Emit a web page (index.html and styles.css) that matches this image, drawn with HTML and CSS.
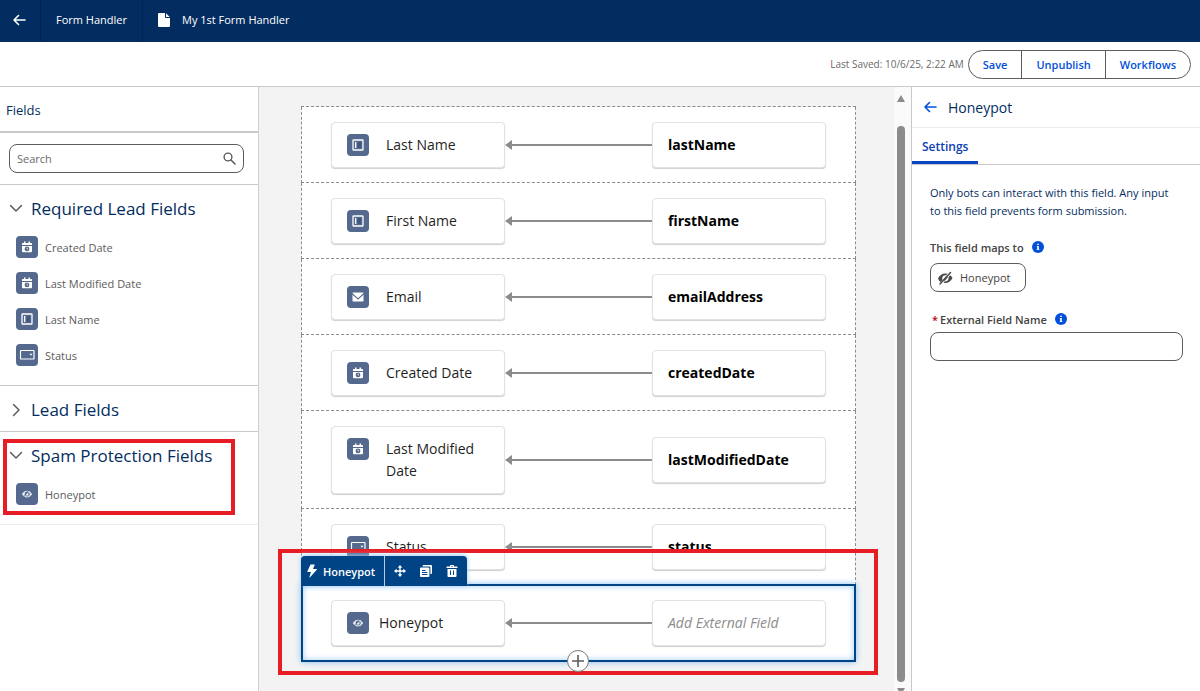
FILE: index.html
```
<!DOCTYPE html>
<html lang="en">

<head>
    <meta charset="UTF-8">
    <meta name="viewport" content="width=device-width, initial-scale=1.0">
    <title>My 1st Form Handler</title>
    <link rel="stylesheet" href="styles.css">
</head>

<body>
    <!-- shared icons -->
    <svg class="sprite" aria-hidden="true">
        <symbol id="i-date" viewBox="0 0 22 22">
            <path fill="#fff" d="M8 5.500h1.500V7h3V5.500H14V7h1.500l.5.500V9H6V7.500l.5-.5H8zM6 10h10v5.500l-.7.700H6.700L6 15.500z" />
            <circle cx="11" cy="12.900" r="2.400" fill="#54698d" />
            <path d="M11 11.500v1.500h1" stroke="#fff" stroke-width=".7" fill="none" />
        </symbol>
        <symbol id="i-text" viewBox="0 0 22 22">
            <rect x="6" y="6" width="10" height="10" rx=".6" fill="none" stroke="#fff" stroke-width="1.300" />
            <path d="M8.700 8v6" stroke="#fff" stroke-width="1.300" />
            <path d="M10.500 8.200h3.500v5.600h-3.500z" fill="#3f557c" />
        </symbol>
        <symbol id="i-mail" viewBox="0 0 22 22">
            <path fill="#fff" d="M5.500 7.200q0-.7.700-.7h9.600q.7 0 .7.700L11 12.200zM5.500 8.700l5.500 5 5.500-5v6q0 .8-.8.8H6.300q-.8 0-.8-.8z" />
        </symbol>
        <symbol id="i-picklist" viewBox="0 0 22 22">
            <rect x="4.500" y="6.500" width="13.500" height="8.500" rx=".6" fill="none" stroke="#fff" stroke-width="1.200" />
            <path d="M13.500 9.700h3l-1.500 2z" fill="#fff" />
        </symbol>
        <symbol id="i-eye" viewBox="0 0 22 22">
            <path fill="#e4e9f1" d="M5.800 11.200Q8 7.800 11 7.800t5.200 3.400Q14 14.400 11 14.400t-5.200-3.200z" />
            <circle cx="11.200" cy="11.100" r="2.500" fill="#54698d" />
            <circle cx="11.400" cy="11.500" r="1.200" fill="#e4e9f1" />
            <path d="M8 13.800l3.800-5.400" stroke="#54698d" stroke-width=".8" />
            <path d="M9 14l4.500-6" stroke="#e4e9f1" stroke-width=".6" />
        </symbol>
        <symbol id="i-back" viewBox="0 0 14 14">
            <path d="M13 7H2M6.500 2.500L2 7l4.500 4.500" fill="none" stroke="currentColor" stroke-width="1.600" stroke-linecap="round" stroke-linejoin="round" />
        </symbol>
        <symbol id="i-chevron" viewBox="0 0 14 14">
            <path d="M1.500 4.500L7 10l5.500-5.500" fill="none" stroke="currentColor" stroke-width="1.500" stroke-linecap="round" stroke-linejoin="round" />
        </symbol>
        <symbol id="i-info" viewBox="0 0 12 12">
            <circle cx="6" cy="6" r="6" fill="#0250d9" />
            <path d="M5.200 2.700h1.600v1.400H5.200zM4.800 5h2v3.300h.5V9H4.700v-.7h.5V5.700h-.4z" fill="#fff" />
        </symbol>
    </svg>

    <header class="topbar">
        <button class="topbar-back" aria-label="Back"><svg width="14" height="14"><use href="#i-back" /></svg></button>
        <a class="topbar-link" href="#">Form Handler</a>
        <div class="topbar-title">
            <svg width="12" height="14" viewBox="0 0 12 14">
                <path fill="#fff" d="M1.200 0H7v4.200q0 .8.800.8H12v7.800q0 1.200-1.200 1.200H1.200Q0 14 0 12.800V1.200Q0 0 1.200 0zM8 .2L11.800 4H8z" />
            </svg>
            <h1>My 1st Form Handler</h1>
        </div>
    </header>

    <div class="actions">
        <span class="saved">Last Saved: 10/6/25, 2:22 AM</span>
        <div class="button-group">
            <button>Save</button>
            <button>Unpublish</button>
            <button>Workflows</button>
        </div>
    </div>

    <div class="builder">
        <!-- Left: available fields -->
        <aside class="sidebar">
            <h2 class="sidebar-title">Fields</h2>
            <div class="search">
                <div class="search-box">
                    <input type="text" placeholder="Search" aria-label="Search fields">
                    <svg width="13" height="13" viewBox="0 0 13 13">
                        <circle cx="5" cy="5" r="3.900" fill="none" stroke="#5c5c5c" stroke-width="1.400" />
                        <path d="M8 8l4 4" stroke="#5c5c5c" stroke-width="1.600" stroke-linecap="round" />
                    </svg>
                </div>
            </div>

            <section class="group">
                <button class="group-head"><svg width="14" height="14"><use href="#i-chevron" /></svg>Required Lead Fields</button>
                <ul>
                    <li><svg class="field-icon"><use href="#i-date" /></svg>Created Date</li>
                    <li><svg class="field-icon"><use href="#i-date" /></svg>Last Modified Date</li>
                    <li><svg class="field-icon"><use href="#i-text" /></svg>Last Name</li>
                    <li><svg class="field-icon"><use href="#i-picklist" /></svg>Status</li>
                </ul>
            </section>
            <section class="group">
                <button class="group-head closed"><svg width="14" height="14"><use href="#i-chevron" /></svg>Lead Fields</button>
            </section>
            <section class="group last">
                <button class="group-head"><svg width="14" height="14"><use href="#i-chevron" /></svg>Spam Protection Fields</button>
                <ul>
                    <li><svg class="field-icon"><use href="#i-eye" /></svg>Honeypot</li>
                </ul>
                <div class="highlight"></div>
            </section>
        </aside>

        <!-- Center: field mappings -->
        <main class="canvas">
            <div class="mappings">
                <div class="row">
                    <div class="card"><svg class="field-icon"><use href="#i-text" /></svg><span>Last Name</span></div>
                    <div class="arrow"></div>
                    <div class="card external">lastName</div>
                </div>
                <div class="row">
                    <div class="card"><svg class="field-icon"><use href="#i-text" /></svg><span>First Name</span></div>
                    <div class="arrow"></div>
                    <div class="card external">firstName</div>
                </div>
                <div class="row">
                    <div class="card"><svg class="field-icon"><use href="#i-mail" /></svg><span>Email</span></div>
                    <div class="arrow"></div>
                    <div class="card external">emailAddress</div>
                </div>
                <div class="row">
                    <div class="card"><svg class="field-icon"><use href="#i-date" /></svg><span>Created Date</span></div>
                    <div class="arrow"></div>
                    <div class="card external">createdDate</div>
                </div>
                <div class="row">
                    <div class="card"><svg class="field-icon"><use href="#i-date" /></svg><span>Last Modified Date</span></div>
                    <div class="arrow"></div>
                    <div class="card external">lastModifiedDate</div>
                </div>
                <div class="row">
                    <div class="card"><svg class="field-icon"><use href="#i-picklist" /></svg><span>Status</span></div>
                    <div class="arrow"></div>
                    <div class="card external">status</div>
                </div>
                <div class="row selected">
                    <div class="card honeypot"><svg class="field-icon"><use href="#i-eye" /></svg><span>Honeypot</span></div>
                    <div class="arrow"></div>
                    <div class="card external empty">Add External Field</div>

                    <div class="highlight"></div>
                    <div class="toolbar">
                        <span class="toolbar-name">
                            <svg width="10" height="14" viewBox="0 0 10 14"><path fill="#fff" d="M3.500.5h4.300L6 5h3.600q.5.200.2.700L2.800 13.500q-.5.200-.4-.4L4 8H.6q-.5-.1-.3-.6z" /></svg>
                            Honeypot
                        </span>
                        <button aria-label="Move">
                            <svg width="12" height="12" viewBox="0 0 12 12"><path fill="#fff" d="M6 0l2.300 2.700H6.700v2.600h2.600V3.700L12 6 9.300 8.300V6.700H6.700v2.600h1.600L6 12 3.700 9.300h1.600V6.700H2.700v1.600L0 6l2.700-2.300v1.600h2.600V2.700H3.700z" /></svg>
                        </button>
                        <button aria-label="Copy">
                            <svg width="12" height="12" viewBox="0 0 12 12">
                                <path fill="#fff" d="M3.500 0H11q1 0 1 1v7q0 1-1 1h-.6V2.500q0-1-1-1H2.600V1q0-1 .9-1z" />
                                <path fill="#fff" fill-rule="evenodd" d="M1 2.500h7.400q1 0 1 1V11q0 1-1 1H1q-1 0-1-1V3.500q0-1 1-1zM2 5v1h3.500V5zM2 7v1h5.300V7zM2 9v1h5.300V9z" />
                            </svg>
                        </button>
                        <button aria-label="Delete">
                            <svg width="12" height="12" viewBox="0 0 12 12"><path fill="#fff" fill-rule="evenodd" d="M4 1.500V.7q0-.7.700-.7h2.600q.7 0 .7.700v.8h3q.5 0 .5.500v1H.500V2q0-.5.500-.5zM5 1v.5h2V1zM1.500 4h9v7q0 1-1 1h-7q-1 0-1-1zM4 5.500v4.500h1V5.500zM7 5.500v4.500h1V5.500z" /></svg>
                        </button>
                    </div>
                    <button class="add" aria-label="Add field">
                        <svg width="12" height="12" viewBox="0 0 12 12"><path d="M6 0v12M0 6h12" stroke="#5c5c5c" stroke-width="1.600" /></svg>
                    </button>
                </div>
            </div>
            <div class="scrollbar">
                <i class="scroll-up"></i>
                <i class="thumb"></i>
                <i class="scroll-down"></i>
            </div>
        </main>

        <!-- Right: field settings -->
        <aside class="panel">
            <div class="panel-head">
                <button aria-label="Back"><svg width="14" height="14"><use href="#i-back" /></svg></button>
                <h2>Honeypot</h2>
            </div>
            <nav class="tabs"><a href="#">Settings</a></nav>
            <div class="panel-body">
                <p>Only bots can interact with this field. Any input to this field prevents form submission.</p>
                <div class="label">This field maps to <svg width="12" height="12"><use href="#i-info" /></svg></div>
                <button class="mapped">
                    <svg width="16" height="14" viewBox="0 0 16 14">
                        <path fill="#4a4a4a" d="M1 7.500Q3.500 2.500 8.500 2.500q1 0 2 .3L9.200 4.300Q5.400 4 5.200 7.500q0 .8.300 1.400l-1.900 2.200Q2 10 1 7.500zM13.200 4.200Q14.800 5.500 15.500 7q-2.500 5-7.300 5-.9 0-1.700-.2l1.400-1.500q3.600.1 3.700-3.400v-.8z" />
                        <path d="M3 13L13.500 1.500" stroke="#4a4a4a" stroke-width="1.500" stroke-linecap="round" />
                        <path d="M7 9.300l3.200-3.600" stroke="#4a4a4a" stroke-width="1.800" />
                    </svg>
                    Honeypot
                </button>
                <div class="label required">
                    <label for="external-name"><abbr>*</abbr>External Field Name</label>
                    <svg width="12" height="12"><use href="#i-info" /></svg>
                </div>
                <input class="text-input" type="text" id="external-name">
            </div>
        </aside>
    </div>
</body>

</html>
```

FILE: styles.css
```
* {
    margin: 0;
    padding: 0;
    box-sizing: border-box;
}

body {
    display: flex;
    flex-direction: column;
    height: 100vh;
    overflow: hidden;
    font-family: "Open Sans", "Noto Sans", sans-serif;
    font-size: 11px;
    color: #2e2e2e;
    background-color: white;
}

button,
input {
    font: inherit;
    color: inherit;
    background: none;
    border: none;
}

button {
    cursor: pointer;
}

a {
    text-decoration: none;
}

ul {
    list-style-type: none;
}

svg {
    flex-shrink: 0;
}

.sprite {
    position: absolute;
    width: 0;
    height: 0;
}

/* Top bar */
.topbar {
    display: flex;
    flex-shrink: 0;
    height: 42px;
    background-color: #032d60;
    color: white;
}

.topbar-back,
.topbar-link,
.topbar-title {
    display: flex;
    align-items: center;
    padding: 0 15px 3px;
    color: white;
}

.topbar-back {
    padding: 0 14px 2px 12px;
    border-right: 1px solid #02244f;
}

.topbar-link {
    border-right: 1px solid #02244f;
}

.topbar-title {
    gap: 12px;
}

.topbar h1 {
    font-size: 11px;
    font-weight: 400;
}

.actions {
    display: flex;
    flex-shrink: 0;
    align-items: center;
    justify-content: flex-end;
    gap: 4px;
    height: 45px;
    padding-right: 9px;
    border-bottom: 1px solid #c9c9c9;
}

.saved {
    font-size: 10px;
    color: #6a6a6a;
}

.button-group {
    display: flex;
    border: 1px solid #5c5c5c;
    border-radius: 15px;
}

.button-group button {
    height: 27px;
    padding: 0 14px;
    color: #0250d9;
    font-weight: 600;
}

.button-group button + button {
    border-left: 1px solid #5c5c5c;
}

.builder {
    display: flex;
    flex: 1;
    min-height: 0;
}

/* Field list */
.sidebar {
    width: 259px;
    flex-shrink: 0;
    border-right: 1px solid #d0d0d0;
}

.sidebar-title {
    height: 46px;
    padding-left: 6px;
    border-bottom: 2px solid #c9c9c9;
    font-size: 13px;
    font-weight: 400;
    line-height: 46px;
    color: #032d60;
}

.search {
    padding: 11px 14px 11px 9px;
    border-bottom: 1px solid #c9c9c9;
}

.search-box {
    display: flex;
    align-items: center;
    height: 29px;
    padding: 0 7px;
    border: 1px solid #5c5c5c;
    border-radius: 8px;
}

.search-box input {
    flex: 1;
    min-width: 0;
    outline: none;
}

.search-box input::placeholder {
    color: #6a6a6a;
}

.group {
    position: relative;
    border-bottom: 1px solid #c9c9c9;
}

.group.last {
    border-color: #ececec;
}

.group-head {
    display: flex;
    align-items: center;
    gap: 8px;
    width: 100%;
    height: 44px;
    padding: 2px 0 0 9px;
    font-size: 17px;
    color: #032d60;
}

.group-head svg {
    color: #5c5c5c;
}

.group-head.closed {
    height: 45px;
}

.group-head.closed svg {
    transform: rotate(-90deg);
}

.group ul {
    padding-bottom: 12px;
}

.group li {
    display: flex;
    align-items: center;
    gap: 7px;
    height: 36px;
    padding-left: 16px;
    color: #5c5c5c;
}

.field-icon {
    width: 22px;
    height: 22px;
    border-radius: 4px;
    background-color: #54698d;
}

.highlight {
    position: absolute;
    border: 4px solid #e71d25;
    pointer-events: none;
}

.sidebar .highlight {
    top: 7px;
    left: 3px;
    right: 23px;
    bottom: 9px;
}

/* Mapping canvas */
.canvas {
    position: relative;
    display: flex;
    flex: 1;
    min-width: 0;
    overflow: hidden;
    background-color: #f3f3f3;
}

.mappings {
    flex: 1;
    align-self: flex-start;
    margin: 19px 38px 0 42px;
    border-top: 1px dashed #8c8c8c;
}

.row {
    position: relative;
    display: grid;
    grid-template-columns: 174px 1fr 174px;
    align-items: center;
    padding: 15px 29px 14px;
    background-color: white;
    border: 1px dashed #8c8c8c;
    border-top: none;
}

.card {
    display: flex;
    gap: 17px;
    padding: 11px 15px;
    border: 1px solid #e2e2e2;
    border-radius: 4px;
    box-shadow: 0 1px 1px #d0d0d0;
    background-color: white;
    font-size: 14px;
    line-height: 22px;
    color: #1f1f1f;
}

.card.honeypot {
    gap: 10px;
}

.card.external {
    font-weight: 700;
    color: black;
}

.card.external.empty {
    font-weight: 400;
    font-style: italic;
    color: #8c8c8c;
}

.arrow {
    display: flex;
    align-items: center;
}

.arrow::before {
    content: "";
    border: 5px solid transparent;
    border-left: none;
    border-right: 7px solid #8c8c8c;
}

.arrow::after {
    content: "";
    flex: 1;
    height: 2px;
    background-color: #8c8c8c;
}

.row.selected {
    margin-top: -1px;
    padding: 14px 28px;
    border: 2px solid #014486;
    box-shadow: 0 0 6px #7fbcf0, inset 0 0 6px #9fccf5;
}

.row.selected .highlight {
    top: -37px;
    right: -24px;
    bottom: -15px;
    left: -25px;
}

.toolbar {
    position: absolute;
    left: -2px;
    bottom: 100%;
    display: flex;
    height: 30px;
    padding-right: 2px;
    border-radius: 4px 4px 0 0;
    background-color: #014486;
    box-shadow: 0 -1px 5px #9fccf5;
    color: white;
}

.toolbar-name {
    display: flex;
    align-items: center;
    gap: 6px;
    padding: 0 9px 0 6px;
    margin-right: 2px;
    border-right: 1px solid #b8cbe0;
    font-weight: 600;
}

.toolbar button {
    display: flex;
    align-items: center;
    justify-content: center;
    width: 26px;
}

.add {
    position: absolute;
    bottom: -12px;
    left: 50%;
    display: flex;
    align-items: center;
    justify-content: center;
    width: 22px;
    height: 22px;
    margin-left: -12px;
    border: 1px solid #7a7a7a;
    border-radius: 50%;
    background-color: white;
}

.scrollbar {
    display: flex;
    flex-direction: column;
    align-items: center;
    width: 17px;
    padding: 8px 3px 0 0;
    background-color: #fafafa;
}

.scroll-up,
.scroll-down {
    border: 4px solid transparent;
}

.scroll-up {
    border-top: none;
    border-bottom: 7px solid #8b8b8b;
}

.scroll-down {
    margin: 6px 0 -4px;
    border-top: 7px solid #8b8b8b;
    border-bottom: none;
}

.thumb {
    flex: 1;
    width: 8px;
    margin-top: 24px;
    border-radius: 4px;
    background-color: #8b8b8b;
}

/* Settings panel */
.panel {
    width: 289px;
    flex-shrink: 0;
    border-left: 1px solid #c9c9c9;
}

.panel-head {
    display: flex;
    align-items: center;
    gap: 11px;
    height: 41px;
    padding-left: 11px;
    border-bottom: 1px solid #ececec;
}

.panel-head button {
    display: flex;
    color: #0250d9;
}

.panel-head h2 {
    font-size: 14px;
    font-weight: 400;
    color: #032d60;
}

.tabs {
    display: flex;
    height: 37px;
    border-bottom: 1px solid #c9c9c9;
}

.tabs a {
    padding: 0 10px;
    border-bottom: 3px solid #0b45c4;
    font-size: 12px;
    line-height: 37px;
    font-weight: 600;
    color: #0b3db3;
}

.panel-body {
    padding: 19px 17px 0 18px;
}

.panel-body p {
    margin-bottom: 17px;
    padding-right: 8px;
    line-height: 18px;
    color: #032d60;
}

.label {
    display: flex;
    align-items: center;
    gap: 8px;
    height: 20px;
    margin-bottom: 6px;
    font-weight: 600;
    color: #444;
}

.label.required {
    margin: 17px 0 3px;
    padding-left: 2px;
}

.label abbr {
    margin-right: 2px;
    color: #ba0517;
}

.mapped {
    display: flex;
    align-items: center;
    gap: 7px;
    height: 29px;
    padding: 0 15px 0 6px;
    border: 1px solid #5c5c5c;
    border-radius: 8px;
    color: #444;
}

.text-input {
    width: 100%;
    height: 29px;
    padding: 0 10px;
    border: 1px solid #5c5c5c;
    border-radius: 8px;
}
```
